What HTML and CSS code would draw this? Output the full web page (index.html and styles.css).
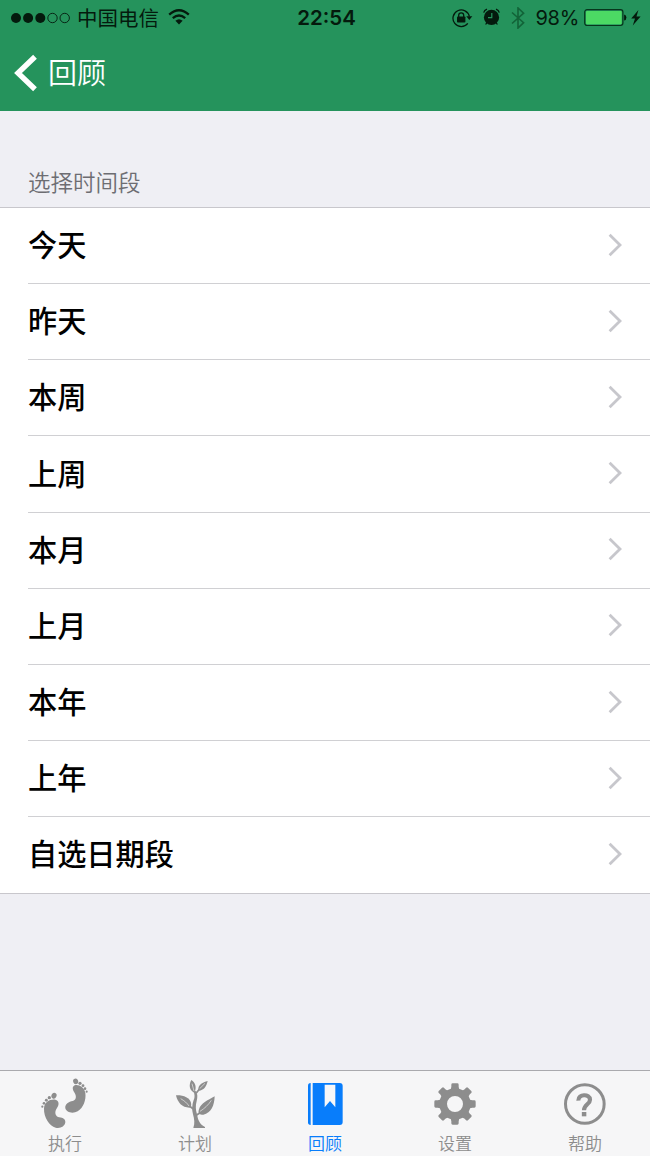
FILE: index.html
```html
<!DOCTYPE html>
<html lang="zh-CN">
<head>
<meta charset="utf-8">
<title>回顾</title>
<link rel="stylesheet" href="styles.css">
</head>
<body>
<div class="screen">
  <header class="header">
    <div class="status">
      <div class="status-left">
        <svg class="signal" viewBox="0 0 60 12"><circle cx="5" cy="6" r="5"/><circle cx="17.1" cy="6" r="5"/><circle cx="29.3" cy="6" r="5"/><g fill="none" stroke="#041a0d" stroke-width=".9"><circle cx="41.5" cy="6" r="4.7"/><circle cx="53.7" cy="6" r="4.7"/></g></svg>
        <span class="carrier">中国电信</span>
        <svg class="wifi" viewBox="0 0 22 16"><g fill="none" stroke="#041a0d" stroke-width="2.3"><path d="M1.2 5.6Q11 -3.2 20.8 5.6"/><path d="M4.8 9.2Q11 3.8 17.2 9.2"/></g><path d="M7.4 11.7Q11 8.6 14.6 11.7L11 15.6Z"/></svg>
      </div>
      <div class="clock">22:54</div>
      <div class="status-right">
        <svg class="lock" viewBox="0 0 21 20"><g fill="none" stroke="#041a0d" stroke-width="1.3"><path d="M15.8 15.4A8.3 8.3 0 1 1 17.4 8.5"/><path d="M6.7 9V7.3a2.5 2.5 0 0 1 5 0V9"/></g><rect x="5" y="8.5" width="8.4" height="6" rx=".8"/><path d="M14.3 8.3H20.3L17.3 12Z"/></svg>
        <svg class="alarm" viewBox="0 0 17 18"><circle cx="8.5" cy="9.4" r="7.6"/><g fill="none" stroke="#041a0d" stroke-width="1.3"><path d="M.7 4.6Q1.3 2 4 1.1M16.300 4.6Q15.700 2 13 1.1M3.8 14.8L2.6 16.5M13.2 14.8L14.4 16.5"/></g><path d="M8.8 5V9.7H5" fill="none" stroke="#25935c" stroke-width="1.2"/></svg>
        <svg class="bluetooth" viewBox="0 0 14 22"><path d="M1 5.5L12.6 15.7L7 21V1L12.6 6.2L1 16.5" fill="none" stroke="#126338" stroke-width="1.6"/></svg>
        <span class="percent">98%</span>
        <svg class="battery" viewBox="0 0 43 18"><rect x=".7" y=".7" width="38.2" height="15.8" rx="2.4" fill="none" stroke="#07351c" stroke-width="1.2"/><rect x="2" y="2" width="35.7" height="13.3" rx="1" fill="#4cd964"/><path d="M40.1 5.6Q42.4 6 42.4 8.6T40.1 11.6Z"/></svg>
        <svg class="bolt" viewBox="0 0 10 16"><path d="M7.4 0L.2 8.5H4L1.8 15.5L9.6 6.5H5.5Z"/></svg>
      </div>
    </div>
    <nav class="nav">
      <svg class="back" viewBox="0 0 24 38"><path d="M21 2.8L4 19L21 35.2" fill="none" stroke="#fff" stroke-width="5.4"/></svg>
      <span>回顾</span>
    </nav>
  </header>
  <h2 class="section-title">选择时间段</h2>
  <ul class="list">
    <li class="row"><span>今天</span><svg class="chevron" viewBox="0 0 14 24"><path d="M1.6 1.8L12 12L1.6 22.2"/></svg></li>
    <li class="row"><span>昨天</span><svg class="chevron" viewBox="0 0 14 24"><path d="M1.6 1.8L12 12L1.6 22.2"/></svg></li>
    <li class="row"><span>本周</span><svg class="chevron" viewBox="0 0 14 24"><path d="M1.6 1.8L12 12L1.6 22.2"/></svg></li>
    <li class="row"><span>上周</span><svg class="chevron" viewBox="0 0 14 24"><path d="M1.6 1.8L12 12L1.6 22.2"/></svg></li>
    <li class="row"><span>本月</span><svg class="chevron" viewBox="0 0 14 24"><path d="M1.6 1.8L12 12L1.6 22.2"/></svg></li>
    <li class="row"><span>上月</span><svg class="chevron" viewBox="0 0 14 24"><path d="M1.6 1.8L12 12L1.6 22.2"/></svg></li>
    <li class="row"><span>本年</span><svg class="chevron" viewBox="0 0 14 24"><path d="M1.6 1.8L12 12L1.6 22.2"/></svg></li>
    <li class="row"><span>上年</span><svg class="chevron" viewBox="0 0 14 24"><path d="M1.6 1.8L12 12L1.6 22.2"/></svg></li>
    <li class="row"><span>自选日期段</span><svg class="chevron" viewBox="0 0 14 24"><path d="M1.6 1.8L12 12L1.6 22.2"/></svg></li>
  </ul>
  <footer class="tabs">
    <div class="tab">
      <svg class="tab-icon" viewBox="0 18 270 180">
        <path d="M72 130C73 112 89 102 106 104C118 107 118 119 111 129C104 139 104 151 114 156C124 158 137 159 136 172C134 185 121 191 107 188C88 183 71 158 72 130Z"/>
        <ellipse cx="102" cy="92" rx="7.5" ry="9" transform="rotate(25 102 92)"/><circle cx="88" cy="98" r="5"/><circle cx="79" cy="106" r="4.4"/><circle cx="72" cy="115" r="4"/><circle cx="67" cy="125" r="3.3"/>
        <path d="M164 61C175 57 193 66 196 84C199 104 190 129 173 139C159 147 139 143 136 130C134 117 147 110 158 108C169 105 170 94 164 84C158 75 155 66 164 61Z"/>
        <ellipse cx="167" cy="49" rx="7.5" ry="8.5" transform="rotate(-20 167 49)"/><circle cx="180" cy="55" r="4.8"/><circle cx="189" cy="62" r="4.3"/><circle cx="195" cy="71" r="3.9"/><circle cx="200" cy="80" r="3.2"/>
      </svg>
      <span>执行</span>
    </div>
    <div class="tab">
      <svg class="tab-icon" viewBox="0 18 270 180">
        <path d="M130 188C135 176 133 162 129 148C125 134 126 119 131 105C135 96 134 88 131 80L138 78C143 88 143 97 140 108C136 122 137 135 141 148C144 163 147 177 165 186V189H131Z"/>
        <path d="M78 91C100 90 119 98 123 113C125 122 122 128 118 128C96 128 83 113 78 91Z"/>
        <path d="M194 94C193 122 184 144 160 149C148 151 143 145 147 133C153 114 172 107 194 94Z"/>
        <path d="M124 45C136 52 141 67 133 83C119 77 115 61 124 45Z"/>
        <path d="M173 48C169 66 161 76 146 77C142 65 151 53 173 48Z"/>
        <path d="M114 120L130 132M158 138L140 150M149 71L139 84" fill="none" stroke="#8d8d8d" stroke-width="5"/>
        <path d="M92 101C104 108 111 114 117 123M184 106C174 121 164 130 150 139M126 56L132 78M165 55L149 71" fill="none" stroke="#f6f6f7" stroke-width="1.8"/>
      </svg>
      <span>计划</span>
    </div>
    <div class="tab active">
      <svg class="tab-icon" viewBox="0 18 270 180">
        <path d="M92 54Q84 54 84 62V172Q84 180 92 180Z"/>
        <path d="M98 54H179Q188 54 188 63V171Q188 180 179 180H98Z"/>
        <path d="M134 59H166V127L150 108L134 127Z" fill="#f7f7f8"/>
      </svg>
      <span>回顾</span>
    </div>
    <div class="tab">
      <svg class="tab-icon" viewBox="0 18 270 180">
        <path fill-rule="evenodd" d="M135 70a47 47 0 1 0 0 94a47 47 0 1 0 0-94ZM135 93a24 24 0 1 1 0 48a24 24 0 1 1 0-48Z"/>
        <path id="tooth" d="M118 78Q124 72 124 65V59Q124 55 128 55H142Q146 55 146 59V65Q146 72 152 78Z"/>
        <use href="#tooth" transform="rotate(45 135 117)"/><use href="#tooth" transform="rotate(90 135 117)"/><use href="#tooth" transform="rotate(135 135 117)"/><use href="#tooth" transform="rotate(180 135 117)"/><use href="#tooth" transform="rotate(225 135 117)"/><use href="#tooth" transform="rotate(270 135 117)"/><use href="#tooth" transform="rotate(315 135 117)"/>
      </svg>
      <span>设置</span>
    </div>
    <div class="tab">
      <svg class="tab-icon" viewBox="0 18 270 180">
        <circle cx="134.5" cy="117" r="58" fill="none" stroke="#8d8d8d" stroke-width="9"/>
        <path d="M115 107C114 86 150 86 150 104C150 118 132 118 132 136" fill="none" stroke="#8d8d8d" stroke-width="12.5"/>
        <rect x="125.5" y="141" width="13.5" height="13"/>
      </svg>
      <span>帮助</span>
    </div>
  </footer>
</div>
</body>
</html>
```

FILE: styles.css
```css
* { box-sizing: border-box; }
body { margin: 0; font-family: "Noto Sans CJK SC", sans-serif; }
svg { display: block; flex: none; }
.screen {
  width: 650px;
  height: 1156px;
  display: flex;
  flex-direction: column;
  background: #efeff4;
  overflow: hidden;
}
.header { height: 111px; background: #25935c; flex: none; }
.status {
  height: 36px;
  display: grid;
  grid-template-columns: 1fr auto 1fr;
  align-items: center;
  color: #041a0d;
  fill: #041a0d;
}
.status-left, .status-right { display: flex; align-items: center; }
.status-left { padding-left: 11px; }
.status-right { justify-content: flex-end; padding-right: 9px; }
.signal { width: 60px; height: 12px; }
.carrier { font-size: 20.5px; line-height: 34px; margin: -2px 0 0 6px; }
.wifi { width: 22px; height: 16px; margin-left: 9px; margin-top: -2px; }
.clock { font: 600 20.5px/36px Inter, sans-serif; padding-left: 3px; }
.lock { width: 21px; height: 20px; margin-right: 10px; }
.alarm { width: 17px; height: 18px; margin-right: 11px; margin-top: -2px; }
.bluetooth { width: 14px; height: 22px; margin-right: 10px; }
.percent { font: 400 20px/36px Inter, sans-serif; letter-spacing: -.3px; margin-right: 5px; }
.battery { width: 43px; height: 18px; margin-right: 4px; }
.bolt { width: 10px; height: 16px; margin-top: -1px; }
.nav { height: 74px; display: flex; align-items: center; padding-left: 14px; color: #fff; font-size: 29px; font-weight: 350; line-height: 40px; }
.nav span { margin: -4px 0 0 10px; }
.back { width: 24px; height: 38px; }
.section-title {
  flex: none;
  height: 96px;
  margin: 0;
  padding: 53px 28px 0;
  color: #6d6d72;
  font-size: 22.5px;
  font-weight: 350;
  line-height: 34px;
}
.list {
  list-style: none;
  margin: 0;
  padding: 0 0 0 28px;
  background: #fff;
  border-top: 1px solid #c8c7cc;
  border-bottom: 1px solid #c8c7cc;
}
.row {
  height: 76.15px;
  display: flex;
  align-items: center;
  justify-content: space-between;
  padding: 0 28px 1.6px 0;
  border-bottom: 1px solid #d0d0d3;
  color: #000;
  font-size: 29.2px;
  font-weight: 500;
  line-height: 42px;
}
.row span { margin-top: -3.4px; }
.row:last-child { border-bottom: 0; height: 75.4px; }
.chevron { width: 14px; height: 24px; fill: none; stroke: #c7c7cc; stroke-width: 2.8; }
.tabs {
  flex: none;
  height: 86px;
  margin-top: auto;
  display: grid;
  grid-template-columns: repeat(5, 1fr);
  background: #f6f6f7;
  border-top: 1px solid #aaaaae;
}
.tab {
  display: flex;
  flex-direction: column;
  align-items: center;
  color: #8d8d8d;
  fill: #8d8d8d;
  font-size: 17px;
  font-weight: 350;
  line-height: 24px;
}
.tab.active { color: #087dfb; fill: #087dfb; }
.tab-icon { width: 90px; height: 60px; }
```
